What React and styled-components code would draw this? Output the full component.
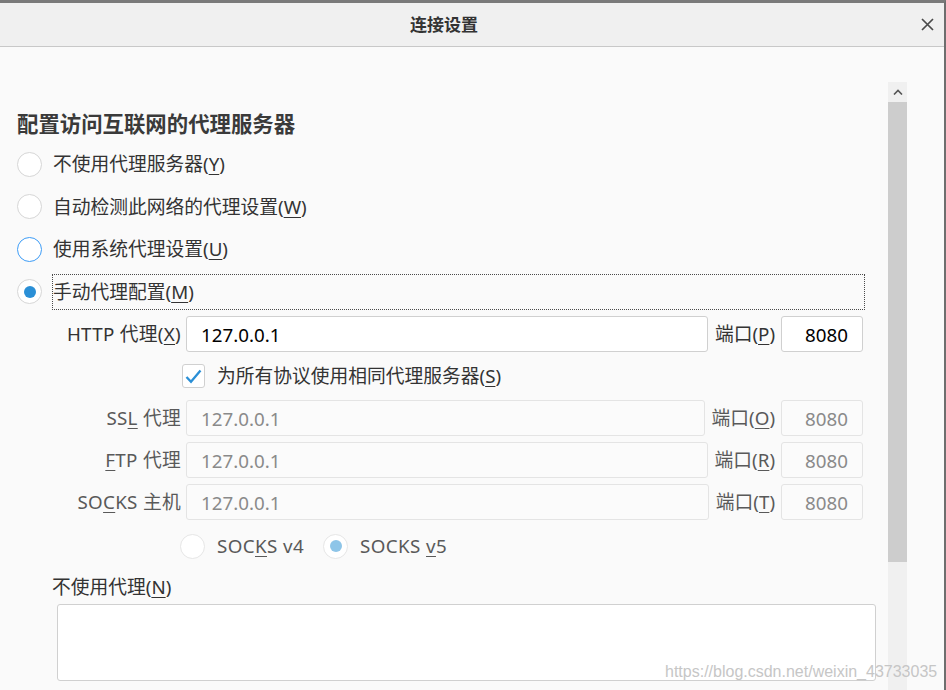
import React from "react";
import styled, { createGlobalStyle } from "styled-components";

const FONT = `"Noto Sans", "Noto Sans CJK SC", sans-serif`;

const GlobalStyle = createGlobalStyle`
  html, body {
    margin: 0;
    padding: 0;
    background: #fafafa;
  }
  body {
    font-family: ${FONT};
  }
  * {
    box-sizing: border-box;
  }
`;

// label split around the underlined access key
const PROXIES = [
  { before: "SS", key: "L", after: " 代理", port: "O" },
  { before: "", key: "F", after: "TP 代理", port: "R" },
  { before: "SO", key: "C", after: "KS 主机", port: "T" },
];

const RADIOS = [
  { text: "不使用代理服务器", key: "Y" },
  { text: "自动检测此网络的代理设置", key: "W" },
  { text: "使用系统代理设置", key: "U", hover: true },
  { text: "手动代理配置", key: "M", checked: true, focused: true },
];

const Key = ({ children }) => <u>{children}</u>;

const App = () => {
  return (
    <>
      <GlobalStyle />
      <Window>
        <TitleBar>
          <Title>连接设置</Title>
          <CloseButton aria-label="关闭">
            <svg width="13" height="13" viewBox="0 0 13 13">
              <path d="M1 1 L12 12 M12 1 L1 12" stroke="#4a4a4a" strokeWidth="1.7" fill="none" />
            </svg>
          </CloseButton>
        </TitleBar>

        <Body>
          <Content>
            <Heading>配置访问互联网的代理服务器</Heading>

            {RADIOS.map((r) => (
              <RadioRow key={r.key}>
                <RadioCircle $hover={r.hover} $checked={r.checked} />
                <RadioLabel $focused={r.focused}>
                  {r.text}(<Key>{r.key}</Key>)
                </RadioLabel>
              </RadioRow>
            ))}

            <ProxySection>
              <FieldRow>
                <FieldLabel>
                  HTTP 代理(<Key>X</Key>)
                </FieldLabel>
                <TextInput defaultValue="127.0.0.1" />
                <PortLabel>
                  端口(<Key>P</Key>)
                </PortLabel>
                <PortInput defaultValue="8080" />
              </FieldRow>

              <CheckRow>
                <CheckBox>
                  <svg width="17" height="15" viewBox="0 0 17 15">
                    <path d="M1.5 8 L6 12.8 L15.5 1.5" stroke="#2a8fd6" strokeWidth="2.3" fill="none" />
                  </svg>
                </CheckBox>
                <CheckLabel>
                  为所有协议使用相同代理服务器(<Key>S</Key>)
                </CheckLabel>
              </CheckRow>

              {PROXIES.map((p) => (
                <FieldRow key={p.port}>
                  <FieldLabel $disabled>
                    {p.before}
                    <Key>{p.key}</Key>
                    {p.after}
                  </FieldLabel>
                  <TextInput $disabled defaultValue="127.0.0.1" disabled />
                  <PortLabel $disabled>
                    端口(<Key>{p.port}</Key>)
                  </PortLabel>
                  <PortInput $disabled defaultValue="8080" disabled />
                </FieldRow>
              ))}

              <VersionRow>
                <RadioCircle $muted />
                <VersionLabel>
                  SOC<Key>K</Key>S v4
                </VersionLabel>
                <RadioCircle $muted $checked $gap />
                <VersionLabel>
                  SOCKS <Key>v</Key>5
                </VersionLabel>
              </VersionRow>
            </ProxySection>

            <NoProxyLabel>
              不使用代理(<Key>N</Key>)
            </NoProxyLabel>
            <NoProxyArea />
          </Content>

          <ScrollBar>
            <ScrollArrow>
              <svg width="10" height="6" viewBox="0 0 10 6">
                <path d="M1 5.5 L5 1.5 L9 5.5" stroke="#555" strokeWidth="1.6" fill="none" />
              </svg>
            </ScrollArrow>
            <ScrollThumb />
          </ScrollBar>
        </Body>

        <Watermark>https://blog.csdn.net/weixin_43733035</Watermark>
      </Window>
    </>
  );
};

export default App;

const Window = styled.div`
  position: relative;
  width: 946px;
  height: 690px;
  overflow: hidden;
  border-top: 3px solid #7a7a7a;
  border-right: 2px solid #6e6e6e;
  background: #fafafa;
  display: flex;
  flex-direction: column;
`;

const TitleBar = styled.header`
  flex: none;
  height: 44px;
  display: flex;
  align-items: center;
  background: #f0f0f0;
  border-bottom: 1px solid #c8c8c8;
`;

const Title = styled.h1`
  width: 888px;
  margin: 0;
  text-align: center;
  font-size: 17px;
  line-height: 24px;
  font-weight: 700;
  color: #333;
`;

const CloseButton = styled.button`
  margin-left: auto;
  margin-right: 8px;
  width: 17px;
  height: 17px;
  padding: 0;
  border: none;
  background: none;
  display: flex;
  align-items: center;
  justify-content: center;
`;

const Body = styled.main`
  flex: 1;
  display: flex;
  min-height: 0;
`;

const Content = styled.section`
  width: 888px;
  flex: none;
  padding: 63px 23px 0 17px;
  font-size: 18.75px;
  color: #333;

  u {
    text-decoration: underline;
    text-underline-offset: 3px;
    text-decoration-thickness: 1px;
  }
`;

const Heading = styled.h2`
  margin: 0 0 5px;
  font-size: 21.4px;
  line-height: 28px;
  font-weight: 700;
  color: #3a3a3a;
`;

const RadioRow = styled.div`
  height: 42.5px;
  display: flex;
  align-items: center;
`;

const RadioCircle = styled.span`
  flex: none;
  width: 25px;
  height: 25px;
  margin-left: ${(p) => (p.$gap ? "19px" : "0")};
  border-radius: 50%;
  background: #fff;
  border: ${(p) =>
    p.$hover
      ? "1.6px solid #3d9cf6"
      : `1px solid ${p.$muted ? "#e6e6e6" : "#d6d6d6"}`};
  display: flex;
  align-items: center;
  justify-content: center;

  &::after {
    content: "";
    display: ${(p) => (p.$checked ? "block" : "none")};
    width: 12px;
    height: 12px;
    border-radius: 50%;
    background: ${(p) => (p.$muted ? "#8ec5e8" : "#2a8fd6")};
  }
`;

const RadioLabel = styled.label`
  margin-left: 10px;
  height: 36px;
  display: flex;
  align-items: center;
  line-height: 1.3;
  border: 1px ${(p) => (p.$focused ? "dotted #4a4a4a" : "solid transparent")};
  flex: ${(p) => (p.$focused ? 1 : "none")};
  color: #333;
`;

const ProxySection = styled.div`
  margin-top: 3px;
  padding-right: 2px;
  display: flex;
  flex-direction: column;
  gap: 6px;
`;

const FieldRow = styled.div`
  height: 36px;
  display: flex;
  align-items: center;
`;

const FieldLabel = styled.label`
  flex: none;
  width: 164px;
  margin-right: 5px;
  text-align: right;
  line-height: 1.3;
  white-space: nowrap;
  letter-spacing: 0.3px;
  color: ${(p) => (p.$disabled ? "#595959" : "#333")};
`;

const TextInput = styled.input`
  flex: 1;
  min-width: 0;
  height: 36px;
  padding: 0 0 0 14px;
  border: 1px solid ${(p) => (p.$disabled ? "#e4e4e4" : "#d0d0d0")};
  border-radius: 3px;
  background: ${(p) => (p.$disabled ? "#fbfbfb" : "#fff")};
  font-family: ${FONT};
  font-size: 18.75px;
  color: ${(p) => (p.$disabled ? "#8a8a8a" : "#000")};
  outline: none;

  &:disabled {
    color: #8a8a8a;
    -webkit-text-fill-color: #8a8a8a;
    opacity: 1;
  }
`;

const PortLabel = styled.label`
  flex: none;
  margin: 0 6px 0 7px;
  line-height: 1.3;
  white-space: nowrap;
  color: ${(p) => (p.$disabled ? "#595959" : "#333")};
`;

const PortInput = styled(TextInput)`
  flex: none;
  width: 82px;
  padding: 0 14px 0 0;
  text-align: right;
`;

const CheckRow = styled.div`
  height: 36px;
  display: flex;
  align-items: center;
  padding-left: 165px;
`;

const CheckBox = styled.span`
  flex: none;
  width: 23px;
  height: 24px;
  border: 1px solid #d0d0d0;
  border-radius: 3px;
  background: #fff;
  display: flex;
  align-items: center;
  justify-content: center;
`;

const CheckLabel = styled.label`
  margin-left: 12px;
  line-height: 1.3;
  white-space: nowrap;
`;

const VersionRow = styled.div`
  height: 40px;
  display: flex;
  align-items: center;
  padding-left: 163px;
`;

const VersionLabel = styled.label`
  margin-left: 12px;
  line-height: 1.3;
  letter-spacing: 0.4px;
  color: #595959;
  white-space: nowrap;
`;

const NoProxyLabel = styled.label`
  display: block;
  margin: 8px 0 0 35px;
  line-height: 26px;
`;

const NoProxyArea = styled.textarea`
  display: block;
  margin: 4px 0 0 40px;
  width: 819px;
  height: 77px;
  border: 1px solid #d0d0d0;
  border-radius: 3px;
  background: #fff;
  resize: none;
  outline: none;
`;

const ScrollBar = styled.div`
  flex: none;
  width: 19px;
  margin-top: 35px;
  background: #f0f0f0;
  display: flex;
  flex-direction: column;
`;

const ScrollArrow = styled.div`
  height: 20px;
  display: flex;
  align-items: center;
  justify-content: center;
`;

const ScrollThumb = styled.div`
  height: 460px;
  background: #cdcdcd;
`;

const Watermark = styled.div`
  position: absolute;
  left: 665px;
  top: 658px;
  font-family: "Liberation Sans", Arial, sans-serif;
  font-size: 16px;
  line-height: 22px;
  color: #c6c6c6;
  white-space: nowrap;
  pointer-events: none;
`;
